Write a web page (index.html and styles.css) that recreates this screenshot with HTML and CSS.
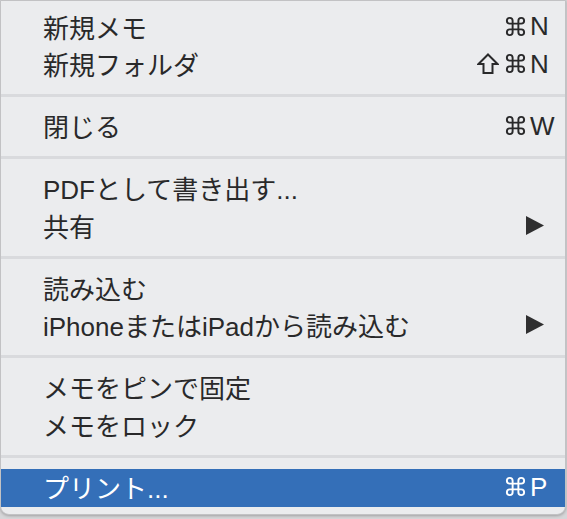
FILE: index.html
```html
<!DOCTYPE html>
<html lang="ja">
<head>
<meta charset="utf-8">
<title>Menu</title>
<link rel="stylesheet" href="styles.css">
</head>
<body>
<div class="menu">
  <div class="item"><span class="label">新規メモ</span><span class="sc"><span class="mods"><svg class="cmd" viewBox="0 0 24 24"><path d="M9 6a3 3 0 1 0-3 3h12a3 3 0 1 0-3-3v12a3 3 0 1 0 3-3H6a3 3 0 1 0 3 3V6z"/></svg></span><span class="key">N</span></span></div>
  <div class="item"><span class="label">新規フォルダ</span><span class="sc"><span class="mods"><svg class="shift" viewBox="0 0 22 22"><path d="M11 1.5 L20.5 11 H15.5 V20 H6.5 V11 H1.5 Z"/></svg><svg class="cmd" viewBox="0 0 24 24"><path d="M9 6a3 3 0 1 0-3 3h12a3 3 0 1 0-3-3v12a3 3 0 1 0 3-3H6a3 3 0 1 0 3 3V6z"/></svg></span><span class="key">N</span></span></div>
  <div class="sep"></div>
  <div class="item"><span class="label">閉じる</span><span class="sc"><span class="mods"><svg class="cmd" viewBox="0 0 24 24"><path d="M9 6a3 3 0 1 0-3 3h12a3 3 0 1 0-3-3v12a3 3 0 1 0 3-3H6a3 3 0 1 0 3 3V6z"/></svg></span><span class="key">W</span></span></div>
  <div class="sep"></div>
  <div class="item"><span class="label">PDFとして書き出す...</span></div>
  <div class="item"><span class="label">共有</span><svg class="arrow" viewBox="0 0 18 19"><path d="M0 0 L18 9.5 L0 19 Z"/></svg></div>
  <div class="sep"></div>
  <div class="item"><span class="label">読み込む</span></div>
  <div class="item"><span class="label">iPhoneまたはiPadから読み込む</span><svg class="arrow" viewBox="0 0 18 19"><path d="M0 0 L18 9.5 L0 19 Z"/></svg></div>
  <div class="sep"></div>
  <div class="item"><span class="label">メモをピンで固定</span></div>
  <div class="item"><span class="label">メモをロック</span></div>
  <div class="sep"></div>
  <div class="item active"><span class="label">プリント...</span><span class="sc"><span class="mods"><svg class="cmd" viewBox="0 0 24 24"><path d="M9 6a3 3 0 1 0-3 3h12a3 3 0 1 0-3-3v12a3 3 0 1 0 3-3H6a3 3 0 1 0 3 3V6z"/></svg></span><span class="key">P</span></span></div>
</div>
</body>
</html>
```

FILE: styles.css
```css
html, body {
  margin: 0;
  padding: 0;
  background: #d6d6d8;
  width: 567px;
  height: 519px;
  overflow: hidden;
}

.menu {
  box-sizing: border-box;
  width: 566px;
  background: #ebecee;
  border: 1px solid #c2c2c4;
  border-radius: 0 0 9px 9px;
  padding: 8px 0 7px 0;
  box-shadow: 0 1px 3px rgba(0, 0, 0, 0.25);
  font-family: "Liberation Sans", "Noto Sans CJK JP", sans-serif;
  font-size: 26px;
  color: #29292a;
}

.item {
  box-sizing: border-box;
  display: flex;
  align-items: center;
  height: 37.5px;
  padding: 0 0 3px 42px;
}

.item.active {
  height: 38px;
  background: #346fb8;
  color: #ffffff;
}

.label {
  flex: 1;
  white-space: nowrap;
}

.sep {
  height: 24.5px;
  display: flex;
  flex-direction: column;
  justify-content: center;
}

.sep::before {
  content: "";
  display: block;
  height: 3px;
  margin-top: -1px;
  background: #d9dadd;
}

.sc {
  display: flex;
  align-items: center;
}

.mods {
  display: flex;
  align-items: center;
  gap: 5px;
  margin-right: 3px;
}

.key {
  width: 35px;
  line-height: 1;
  font-size: 26px;
}

.cmd {
  width: 23px;
  height: 23px;
  fill: none;
  stroke: currentColor;
  stroke-width: 2;
  stroke-linecap: round;
  stroke-linejoin: round;
}

.shift {
  width: 22px;
  height: 22px;
  fill: none;
  stroke: currentColor;
  stroke-width: 2;
  stroke-linejoin: miter;
}

.arrow {
  width: 18px;
  height: 19px;
  fill: #2f2f30;
  margin-right: 21px;
}
```
